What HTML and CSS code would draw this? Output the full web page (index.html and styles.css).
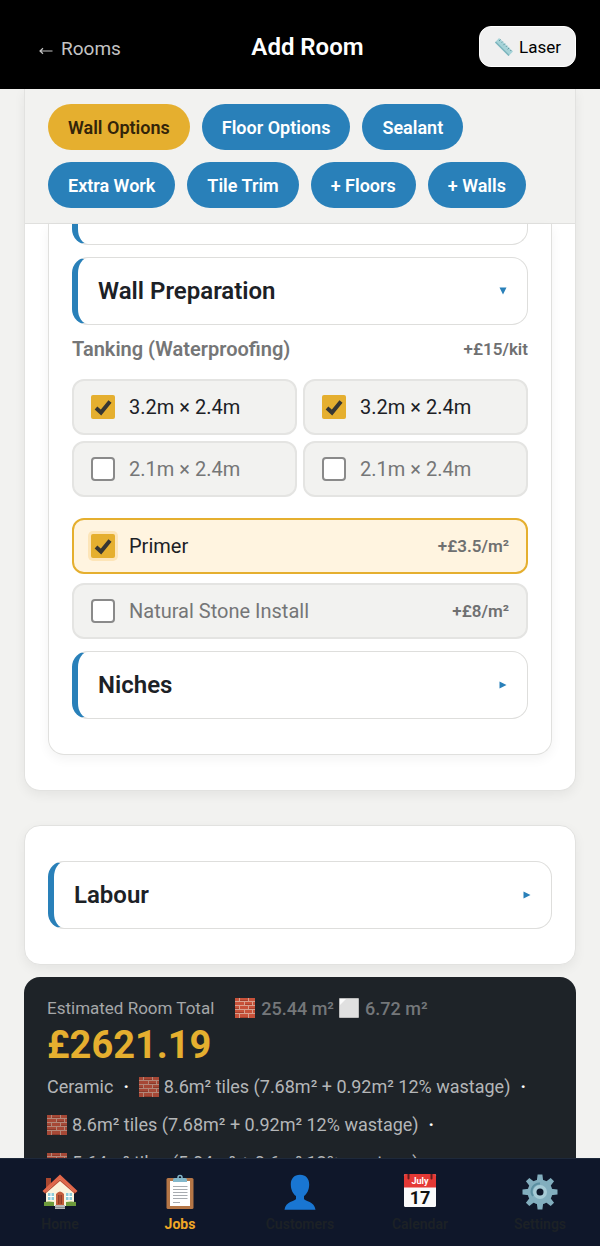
FILE: index.html
```html
<!DOCTYPE html>
<html lang="en">
<head>
  <meta charset="UTF-8" />
  <title>Add Room</title>
  <meta name="viewport" content="width=device-width, initial-scale=1.0" />
  <link rel="stylesheet" href="styles.css">
</head>
<body>

  <!-- Shared icons -->
  <svg class="sprite" aria-hidden="true">
    <symbol id="bricks" viewBox="0 0 20 20">
      <rect width="20" height="20" fill="#d9a08e" />
      <path fill="#c8523a" d="M0 0h4v3H0zM5 0h8v3H5zM14 0h6v3h-6zM0 4h9v3H0zM10 4h7v3h-7zM18 4h2v3h-2zM0 8h4v3H0zM5 8h8v3H5zM14 8h6v3h-6zM0 12h9v3H0zM10 12h7v3h-7zM18 12h2v3h-2zM0 16h4v4H0zM5 16h8v4H5zM14 16h6v4h-6z" />
      <path fill="#a8402c" d="M5 2h8v1H5zM10 6h7v1h-7zM0 10h4v1H0zM14 10h6v1h-6zM0 14h9v1H0zM5 19h8v1H5z" />
    </symbol>
    <symbol id="tile" viewBox="0 0 20 20">
      <rect width="20" height="20" rx="1" fill="#bdbdbd" />
      <path fill="#e0e0e0" d="M1 1h18v18H1z" />
      <path fill="#fafafa" d="M1 1h6L1 7z" />
    </symbol>
  </svg>

  <header class="header">
    <a class="back-link" href="#rooms">
      <svg width="14" height="10" viewBox="0 0 14 10"><path d="M13.500 5H1M4 2.200L1 5l3 2.800" fill="none" stroke="currentColor" stroke-width="1.200" /></svg>
      Rooms
    </a>
    <h1>Add Room</h1>
    <button class="laser-btn" type="button">
      <svg width="20" height="20" viewBox="0 0 20 20">
        <path d="M5 1l14 13.500-4.500 4.500L1 5.500z" fill="#a6d3d8" />
        <path d="M1 5.500L14.500 19l1-1L2 4.500z" fill="#7db4bc" />
        <path d="M6.500 2.500L5 4M8.700 4.600L7.700 5.600M10.900 6.700L9.400 8.200M13 8.800l-1 1M15.200 10.900l-1.500 1.500M17.300 13l-1 1" stroke="#5f949c" fill="none" />
      </svg>
      Laser
    </button>
  </header>

  <main class="content">

    <!-- Room options -->
    <section class="card">
      <div class="tabs">
        <button class="tab active" type="button">Wall Options</button>
        <button class="tab" type="button">Floor Options</button>
        <button class="tab" type="button">Sealant</button>
        <button class="tab" type="button">Extra Work</button>
        <button class="tab" type="button">Tile Trim</button>
        <button class="tab" type="button">+ Floors</button>
        <button class="tab" type="button">+ Walls</button>
      </div>

      <div class="panel">
        <div class="accordion-end"></div>

        <button class="accordion" type="button" aria-expanded="true">
          Wall Preparation
          <svg class="caret" viewBox="0 0 8 8"><path d="M0.500 0.500h7L4 7.500z" fill="currentColor" /></svg>
        </button>

        <div class="group-title">
          <h2>Tanking (Waterproofing)</h2>
          <span class="price">+£15/kit</span>
        </div>
        <div class="wall-grid">
          <label class="option selected"><input type="checkbox" checked> 3.2m × 2.4m</label>
          <label class="option selected"><input type="checkbox" checked> 3.2m × 2.4m</label>
          <label class="option"><input type="checkbox"> 2.1m × 2.4m</label>
          <label class="option"><input type="checkbox"> 2.1m × 2.4m</label>
        </div>

        <div class="extras">
          <label class="option selected highlight"><input type="checkbox" checked> Primer <span class="price">+£3.5/m²</span></label>
          <label class="option"><input type="checkbox"> Natural Stone Install <span class="price">+£8/m²</span></label>
        </div>

        <button class="accordion" type="button" aria-expanded="false">
          Niches
          <svg class="caret" viewBox="0 0 8 8"><path d="M0.500 0.500v7L7.500 4z" fill="currentColor" /></svg>
        </button>
      </div>
    </section>

    <!-- Labour -->
    <section class="card labour">
      <button class="accordion" type="button" aria-expanded="false">
        Labour
        <svg class="caret" viewBox="0 0 8 8"><path d="M0.500 0.500v7L7.500 4z" fill="currentColor" /></svg>
      </button>
    </section>

    <!-- Running total -->
    <section class="total">
      <div class="total-head">
        <span class="total-label">Estimated Room Total</span>
        <span class="area"><svg class="emoji"><use href="#bricks" /></svg> <span>25.44 m²</span></span>
        <span class="area"><svg class="emoji"><use href="#tile" /></svg> <span>6.72 m²</span></span>
      </div>
      <div class="amount">£2621.19</div>
      <div class="breakdown">
        <span class="item">Ceramic</span>
        <span class="dot">·</span>
        <span class="item"><svg class="emoji"><use href="#bricks" /></svg>8.6m² tiles (7.68m² + 0.92m² 12% wastage)</span>
        <span class="dot">·</span>
        <span class="item"><svg class="emoji"><use href="#bricks" /></svg>8.6m² tiles (7.68m² + 0.92m² 12% wastage)</span>
        <span class="dot">·</span>
        <span class="item"><svg class="emoji"><use href="#bricks" /></svg>5.64m² tiles (5.04m² + 0.6m² 12% wastage)</span>
      </div>
    </section>
  </main>

  <nav class="bottom-nav">
    <a href="#home">
      <svg viewBox="0 0 36 36">
        <path fill="#a9472f" d="M4 4h5v10H4z" />
        <path fill="#fbf3dc" d="M18 4L4 17v15h28V17z" />
        <path fill="#e2674a" d="M18 .5L.5 17l2 2L18 5l15.500 14 2-2z" />
        <path fill="#c24e33" d="M2.500 19L18 5l15.500 14-.8.800L18 7 3.300 19.800z" />
        <path fill="#8ccbd8" d="M6 19h6v7H6zM24 19h6v7h-6z" />
        <path stroke="#fff" d="M9 19v7M6 22.500h6M27 19v7M24 22.500h6" />
        <path fill="#c35d3b" d="M14 32V20q4-5 8 0v12z" />
        <path fill="#8f3d28" d="M16 21h1.500v9H16zM18.500 21H20v9h-1.500z" />
        <path fill="#6d9a3b" d="M2 28q5-1 10 0v4H2zM24 28q5-1 10 0v4H24z" />
        <path fill="#b6b8ba" d="M13 31h10v4H13z" />
        <path fill="#8c8f92" d="M13 33h10v1H13z" />
      </svg>
      Home
    </a>
    <a class="active" href="#jobs">
      <svg viewBox="0 0 36 36">
        <rect x="4.500" y="4" width="27" height="31" rx="1.500" fill="#b57646" />
        <path fill="#fff" d="M8 7h20v25H8z" />
        <path stroke="#a7abb0" stroke-width="1" d="M11 12.500h14.500M11 15.500h14.500M11 18.500h14.500M11 21.500h14.500M11 24.500h14.500M11 28.500h7" />
        <path fill="#83b8cb" d="M11 8V5.500q0-1.500 2-1.500h10q2 0 2 1.500V8z" />
        <circle cx="18" cy="3.500" r="2" fill="none" stroke="#83b8cb" stroke-width="1.500" />
      </svg>
      Jobs
    </a>
    <a href="#customers">
      <svg viewBox="0 0 36 36">
        <path fill="#1976d2" d="M18 .8c-6 0-9.200 4-9.200 9.700 0 5 2.200 9.500 5.200 11.500v3c-1 2.500-10.500 2-11.500 10.800h31C32.500 27 23 27.500 22 25v-3c3-2 5.200-6.500 5.200-11.500C27.200 4.800 24 .8 18 .8z" />
      </svg>
      Customers
    </a>
    <a href="#calendar">
      <svg viewBox="0 0 36 36">
        <rect x="2" width="32" height="33" rx="1.500" fill="#fafafa" />
        <path fill="#e53935" d="M2 13.500V1.500Q2 0 3.500 0h29Q34 0 34 1.500v12z" />
        <path stroke="#631c1c" stroke-width="2" stroke-linecap="round" d="M6.500 0v4.500M29.500 0v4.500" />
        <text class="cal-month" x="18" y="10">July</text>
        <text class="cal-day" x="18" y="30">17</text>
      </svg>
      Calendar
    </a>
    <a href="#settings">
      <svg viewBox="0 0 36 36">
        <g fill="#82aebe">
          <circle cx="18" cy="18" r="12.500" />
          <path id="cog" d="M14.800 7l.8-6.500h4.800l.8 6.500zM14.800 29l.8 6.500h4.800l.8-6.500z" />
          <use href="#cog" transform="rotate(45 18 18)" />
          <use href="#cog" transform="rotate(90 18 18)" />
          <use href="#cog" transform="rotate(135 18 18)" />
        </g>
        <circle cx="18" cy="18" r="7" fill="#a6cbd6" />
        <path d="M11 22a8 8 0 0 1 7-12.500" fill="none" stroke="#5b8fa1" stroke-width="2" />
        <circle cx="18" cy="18" r="3.500" fill="#0f172a" />
      </svg>
      Settings
    </a>
  </nav>

</body>
</html>
```
FILE: styles.css
```css
* {
  box-sizing: border-box;
}
body {
  font-family: Roboto, "Liberation Sans", sans-serif;
  background: #f2f2f0;
  color: #1c2126;
  margin: 0;
  height: 100vh;
  display: flex;
  flex-direction: column;
}
button {
  font-family: inherit;
  cursor: pointer;
}
.sprite {
  display: none;
}

/* Header */
.header {
  background: #000;
  display: grid;
  grid-template-columns: 1fr auto 1fr;
  align-items: center;
  height: 89px;
  padding: 4px 24px 0 39px;
  flex-shrink: 0;
}
.header h1 {
  color: #fff;
  font-size: 24px;
  font-weight: 600;
  margin: 0;
}
.back-link {
  display: flex;
  align-items: center;
  gap: 8px;
  color: #c4c4c4;
  font-size: 19px;
  text-decoration: none;
  padding-top: 3px;
}
.back-link svg {
  margin-top: 6px;
}
.laser-btn {
  justify-self: end;
  display: flex;
  align-items: center;
  gap: 5px;
  height: 41px;
  padding: 0 14px;
  background: #f0f0f0;
  color: #000;
  border: 1px solid #fff;
  border-radius: 12px;
  font-size: 17px;
}

/* Scrolling content */
.content {
  flex: 1;
  min-height: 0;
  overflow-y: auto;
  scrollbar-width: none;
  padding: 0 24px;
}
.card {
  background: #fff;
  border: 1px solid #e2e2e0;
  border-top: none;
  border-radius: 0 0 16px 16px;
  box-shadow: 0 4px 12px rgba(0,0,0,0.06);
  padding-bottom: 35px;
}
.tabs {
  display: flex;
  flex-wrap: wrap;
  gap: 12px;
  padding: 15px 23px;
  background: #f2f2f0;
  border-bottom: 1px solid #e0e0de;
}
.tab {
  height: 46px;
  padding: 0 20px;
  border: none;
  border-radius: 23px;
  background: #2980b9;
  color: #fff;
  font-size: 18px;
  font-weight: 600;
}
.tab.active {
  background: #e5af2f;
  color: #33240a;
}
.panel {
  margin: 0 23px;
  padding: 0 23px 35px;
  border: 1px solid #e0e0de;
  border-top: none;
  border-radius: 0 0 16px 16px;
  box-shadow: 0 4px 12px rgba(0,0,0,0.05);
}

/* Accordions */
.accordion,
.accordion-end {
  background: #fff;
  border: 1px solid #dededc;
  border-left: 6px solid #2980b9;
  border-radius: 16px;
}
.accordion {
  display: flex;
  align-items: center;
  justify-content: space-between;
  width: 100%;
  height: 68px;
  padding: 0 20px;
  color: #1c2126;
  font-size: 24px;
  font-weight: 600;
}
.accordion-end {
  height: 21px;
  border-top: none;
  border-radius: 0 0 16px 16px;
  margin-bottom: 12px;
}
.caret {
  width: 8px;
  height: 8px;
  color: #2980b9;
}

/* Options */
.group-title {
  display: flex;
  align-items: center;
  justify-content: space-between;
  height: 48px;
  margin-bottom: 6px;
}
.group-title h2 {
  margin: 0;
  color: #757677;
  font-size: 20px;
  font-weight: 600;
}
.price {
  margin-left: auto;
  color: #6f7071;
  font-size: 17px;
  font-weight: 600;
}
.wall-grid {
  display: grid;
  grid-template-columns: 1fr 1fr;
  gap: 6px;
  margin-bottom: 21px;
}
.extras {
  display: grid;
  gap: 9px;
  margin-bottom: 12px;
}
.option {
  display: flex;
  align-items: center;
  height: 56px;
  padding: 0 17px;
  background: #f2f2f0;
  border: 2px solid #e4e4e2;
  border-radius: 12px;
  color: #757677;
  font-size: 20px;
}
.option.selected {
  color: #1c2126;
}
.option.highlight {
  background: #fff4e0;
  border-color: #e5af2f;
}
.option input {
  appearance: none;
  width: 24px;
  height: 24px;
  margin: 0 14px 0 0;
  background: #fff;
  border: 2px solid #8a8a8a;
  border-radius: 4px;
}
.option input:checked {
  background: #e5af2f url("data:image/svg+xml,%3Csvg xmlns='http://www.w3.org/2000/svg' viewBox='0 0 24 24'%3E%3Cpath d='M5 13l5 4.500L19 6.500' fill='none' stroke='%23363633' stroke-width='4'/%3E%3C/svg%3E") center / 24px;
  border: none;
  border-radius: 2px;
}
.option.highlight input {
  box-shadow: 0 0 0 3px #fde5b8;
}

.labour {
  margin-top: 34px;
  padding: 35px 23px;
  border-top: 1px solid #e2e2e0;
  border-radius: 16px;
}

/* Total */
.total {
  margin-top: 12px;
  padding: 17px 23px;
  background: #1e2328;
  border-radius: 16px 16px 0 0;
}
.emoji {
  width: 20px;
  height: 20px;
}
.total-head {
  display: flex;
  align-items: center;
  gap: 5px;
  height: 28px;
}
.total-label {
  color: #a5a7a9;
  font-size: 17px;
  margin-right: 16px;
}
.area {
  display: flex;
  align-items: center;
  gap: 6px;
  color: #74777a;
  font-size: 18px;
  font-weight: 500;
}
.amount {
  color: #e5af2f;
  font-size: 38px;
  font-weight: 700;
  line-height: 46px;
}
.breakdown {
  display: flex;
  flex-wrap: wrap;
  column-gap: 10px;
  font-size: 18px;
  line-height: 38px;
}
.item {
  display: flex;
  align-items: center;
  gap: 5px;
  color: #b4b6b8;
}
.item .emoji {
  opacity: 0.8;
}
.dot {
  color: #fff;
  font-weight: 700;
}

/* Bottom navigation */
.bottom-nav {
  display: grid;
  grid-template-columns: repeat(5, 1fr);
  height: 88px;
  padding-top: 15px;
  background: #0f172a;
  border-top: 1px solid #1e293b;
  flex-shrink: 0;
}
.bottom-nav a {
  display: flex;
  flex-direction: column;
  align-items: center;
  gap: 5px;
  color: #1c2126;
  font-size: 14px;
  font-weight: 600;
  line-height: 18px;
  text-decoration: none;
}
.bottom-nav a.active {
  color: #f0a726;
  font-weight: 700;
}
.bottom-nav svg {
  width: 36px;
  height: 36px;
}
.cal-month,
.cal-day {
  text-anchor: middle;
  font-weight: 700;
}
.cal-month {
  fill: #fff;
  font-size: 9px;
}
.cal-day {
  fill: #111;
  font-size: 18px;
}
```
